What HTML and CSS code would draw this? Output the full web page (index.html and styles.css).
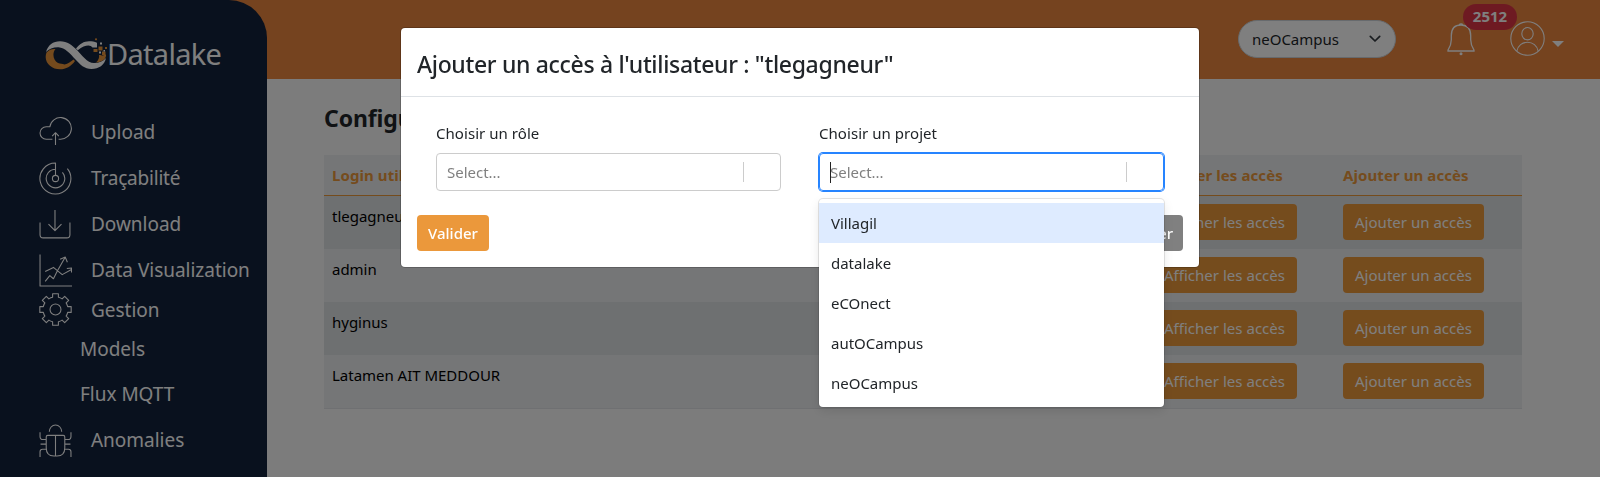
FILE: index.html
```html
<!DOCTYPE html>
<html lang="fr">
<head>
<meta charset="utf-8">
<title>Datalake</title>
<link rel="stylesheet" href="styles.css">
</head>
<body>
<div class="app">
  <header class="topbar">
    <div class="project-select"><span>neOCampus</span>
      <svg width="12" height="8" viewBox="0 0 12 8" fill="none" stroke="#343a40" stroke-width="1.7" stroke-linecap="round" stroke-linejoin="round"><path d="M1.3 1.3 6 6l4.700-4.700"/></svg>
    </div>
    <div class="bell">
      <svg width="28" height="33" viewBox="0 0 28 33" fill="none" stroke="#fff" stroke-width="1.3"><path d="M1 27.200c2.500-4 3.300-6 3.300-10.500v-4C4.300 5.500 8 2 14 2s9.700 3.500 9.700 10.700v4c0 4.500.8 6.500 3.300 10.500v.8H1zM12.500 1.700c0-1.100 3-1.100 3 0"/><circle cx="14" cy="30.700" r="1.500" fill="#fff" stroke="none"/></svg>
      <span class="badge">2512</span>
    </div>
    <div class="user">
      <svg width="35" height="35" viewBox="0 0 35 35" fill="none" stroke="#fff" stroke-width="1.100"><circle cx="17.500" cy="17.500" r="16.700"/><ellipse cx="17.500" cy="12.700" rx="5.700" ry="6.200"/><path d="M6.800 30.200c1-5.500 5.500-8.900 10.700-8.900s9.700 3.400 10.700 8.900"/></svg>
      <span class="caret"></span>
    </div>
  </header>
  <aside class="sidebar">
    <div class="brand">
      <svg width="64" height="34" viewBox="0 0 64 34">
        <path fill="#e8943a" d="M1.500 14.500C4 11.500 7 10.700 10.500 11 7 15 8 22 13 25c2.500 1.300 4.500.3 6.500 1.500C23 26 26 23.500 28.500 21.500l1.500 1.500C26 28.500 21 31.300 15 31.300 6 31.300-2 24 1.500 14.500z"/>
        <path fill="#fff" d="M1 14C3 7 8 3.200 15 3.200c7.500 0 12 4 16.500 8.300C37 17 42 25 49 25c5 0 9-1.500 12-5-1.500 7-7 11-14.500 11-7 0-11.500-4.500-16-9.500C25.500 16 20 9.500 13.500 9.200 8.500 9 4 11 1 14z"/>
        <path fill="#fff" d="M31 10.500C34.500 6 39 3.200 44 3.200c3 0 5.500.3 8 1.500v4.800h-4.500C45.500 6.500 40 6.500 32.800 12.200z"/>
        <path fill="#e8943a" d="M51 24.500c2.500-2.500 3.500-5 3-7.500 2 0 3 .7 4 .5 1-.5 2-1 3-1 .5 4-3 7.500-10 8z"/>
        <g fill="#e8943a"><circle cx="51" cy="1.300" r="1.100"/><rect x="48.500" y="11" width="4" height="3"/><rect x="53.500" y="8.500" width="4" height="4"/><rect x="60" y="9" width="2" height="2"/><rect x="57" y="13.500" width="3.500" height="3.500"/></g>
        <g fill="#fff"><rect x="55" y="4.500" width="2" height="2"/><rect x="54" y="13.500" width="2" height="2"/><rect x="58.500" y="12" width="1.500" height="1.500"/></g>
      </svg>
      <span>Datalake</span>
    </div>
    <nav class="nav">
      <a class="item"><svg class="ico" viewBox="0 0 32 32"><path d="M13 22.500H7A6 6 0 0 1 7 10.500H10.500A10.500 10.500 0 1 1 20.500 22.500h-1.500M16 28V16.500M12.800 19.500 16 16.200l3.200 3.300"/></svg><span>Upload</span></a>
      <a class="item"><svg class="ico" viewBox="0 0 32 32"><path d="M16 13V1a15 15 0 1 0 11.500 5.500M16 7a9 9 0 1 0 6.700 3"/><circle cx="16" cy="16" r="3"/></svg><span class="snug">Traçabilité</span></a>
      <a class="item"><svg class="ico" viewBox="0 0 32 32"><path d="M1 14v12q0 3 3 3h23q3 0 3-3V14M15.500 2v20M9.200 15.700l6.300 6.300 6.300-6.300"/></svg><span>Download</span></a>
      <a class="item"><svg class="ico" viewBox="0 0 32 32"><path d="M1 .5V31h31M6 26.500l4.500-5.500 3.500 3 3.500-7 8-14M6 17l8-4 8.500 7 9-5M20.500 5l5-2 2 5M27 14l4.500-.5V18"/></svg><span>Data Visualization</span></a>
      <a class="item short"><svg class="ico" viewBox="0 0 32 32"><path d="M13.200.800h5.600v3.400q2 .4 3.600 1.500L24.900 3.200l3.900 3.900-2.500 2.500q1.100 1.700 1.500 3.600h3.400v5.600h-3.400q-.4 2-1.500 3.600l2.500 2.500-3.900 3.900-2.500-2.500q-1.700 1.100-3.600 1.500v3.400h-5.600v-3.400q-2-.4-3.600-1.500l-2.500 2.500-3.900-3.900 2.500-2.500q-1.100-1.700-1.500-3.600H.8v-5.600h3.400q.4-2 1.500-3.600L3.200 7.100l3.900-3.900 2.500 2.500q1.700-1.100 3.600-1.500z"/><circle cx="16" cy="16" r="5.300"/></svg><span>Gestion</span></a>
      <a class="item sub"><span>Models</span></a>
      <a class="item sub"><span>Flux MQTT</span></a>
      <a class="item"><svg class="ico" viewBox="0 0 32 32"><path d="M7 12.500q0-1.500 1.500-1.500h15q1.500 0 1.500 1.500V23q0 8-7.500 8h-3Q7 31 7 23zM16 11v20M10 7.500a6 6.500 0 0 1 12 0M1 8v4q0 3 3 3h3M31 8v4q0 3-3 3h-3M1.500 19.500h5.500M25 19.500h5.500M1 32v-5q0-2.500 2.500-2.500H7M31 32v-5q0-2.500-2.500-2.500H25"/></svg><span>Anomalies</span></a>
    </nav>
  </aside>
  <main class="content">
    <h1>Configuration</h1>
    <div class="table">
      <div class="row head"><span>Login utilisateur</span><span>Afficher les accès</span><span>Ajouter un accès</span></div>
      <div class="row odd"><span>tlegagneur</span><span><button class="btn">Afficher les accès</button></span><span><button class="btn add">Ajouter un accès</button></span></div>
      <div class="row"><span>admin</span><span><button class="btn">Afficher les accès</button></span><span><button class="btn add">Ajouter un accès</button></span></div>
      <div class="row odd"><span>hyginus</span><span><button class="btn">Afficher les accès</button></span><span><button class="btn add">Ajouter un accès</button></span></div>
      <div class="row"><span>Latamen AIT MEDDOUR</span><span><button class="btn">Afficher les accès</button></span><span><button class="btn add">Ajouter un accès</button></span></div>
    </div>
  </main>
</div>
<div class="backdrop">
  <section class="modal">
    <h2><span>Ajouter un accès à l'utilisateur : "tlegagneur"</span></h2>
    <div class="fields">
      <div class="field"><label>Choisir un rôle</label><div class="select"><span>Select...</span><i></i></div></div>
      <div class="field"><label>Choisir un projet</label>
        <div class="select focus"><b class="cursor"></b><span>Select...</span><i></i></div>
        <ul class="menu"><li class="active">Villagil</li><li>datalake</li><li>eCOnect</li><li>autOCampus</li><li>neOCampus</li></ul>
      </div>
    </div>
    <div class="actions"><button class="btn ok">Valider</button><button class="btn close">Fermer</button></div>
  </section>
</div>
</body>
</html>
```
FILE: styles.css
```css
* { box-sizing: border-box; }
body { margin: 0; height: 477px; overflow: hidden; font-family: "Noto Sans", "Open Sans", sans-serif; font-size: 15px; letter-spacing: -0.02px; color: #212529; }
.app { display: grid; grid-template: 79px 398px / 267px 1fr; background: #f9f9f9; }
.topbar { grid-area: 1 / 1 / 2 / 3; background: #ea863e; display: flex; align-items: flex-start; padding: 20px 36px 0 1238px; }
.sidebar { grid-area: 1 / 1 / 3 / 2; background: #12223c; border-top-right-radius: 38px; color: #fff; z-index: 1; }
.brand { display: flex; align-items: center; height: 109px; padding-left: 45px; font-size: 29px; letter-spacing: -0.700px; }
.brand svg { flex: none; margin-right: -2px; }
.brand span { margin-top: -2px; }
.nav { display: flex; flex-direction: column; }
.item { display: flex; align-items: center; height: 46px; padding-left: 39px; font-size: 19px; white-space: nowrap; }
.item.short { height: 33px; }
.item.sub { height: 45.500px; padding-left: 80px; }
.item .snug { letter-spacing: -0.200px; }
.ico { width: 33px; height: 33px; margin-right: 19px; flex: none; fill: none; stroke: #fff; stroke-width: 1.050; stroke-linejoin: round; }
.project-select { width: 158px; height: 38px; border: 1px solid #ced4da; border-radius: 19px; background: #fff; display: flex; align-items: center; justify-content: space-between; padding: 0 14px 0 13px; flex: none; }
.bell { position: relative; margin: 3px 0 0 51px; flex: none; height: 33px; }
.badge { position: absolute; left: 16px; top: -19px; width: 54px; height: 26px; border-radius: 13px; background: #dc3545; color: #fff; font-weight: 700; font-size: 15px; line-height: 25px; text-align: center; letter-spacing: 0; }
.user { display: flex; align-items: center; margin: 1px 0 0 35px; gap: 7px; }
.caret { border: 6px solid transparent; border-top-color: #fff; border-bottom: 0; margin-top: 11px; }
.content { padding: 22px 78px 0 57px; }
h1 { margin: 0; font-size: 23px; line-height: 34px; height: 54px; font-weight: 700; letter-spacing: -0.100px; }
.table { border-bottom: 1px solid #dfe1e4; color: #000; }
.row { display: grid; grid-template-columns: 820px 191px 1fr; height: 53px; background: #eaecef; padding: 8px 0 0 8px; line-height: 24px; }
.row.odd { background: #dde0e3; }
.row.head { height: 41px; border-bottom: 1px solid #eb983b; color: #eb983b; font-weight: 700; letter-spacing: 0.080px; }
.btn { display: block; height: 36px; width: 145px; padding: 0; border: 0; border-radius: 4px; background: #eb983b; color: #fff; font: inherit; letter-spacing: 0.020px; }
.btn.add { width: 141px; }
.backdrop { position: fixed; inset: 0; background: rgba(0,0,0,.5); z-index: 5; padding: 28px 401px 0; }
.modal { height: 239px; background: #fff; border-radius: 4px; box-shadow: 0 0 0 1px rgba(0,0,0,.2); }
h2 { margin: 0; height: 69px; border-bottom: 1px solid #dee2e6; padding: 17px 16px 0; font-size: 23px; letter-spacing: -0.320px; line-height: 38px; font-weight: 500; white-space: nowrap; }
.fields { display: flex; gap: 38px; padding: 24px 35px 0; }
.field { width: 345px; position: relative; }
label { display: block; height: 32px; line-height: 24px; letter-spacing: 0.050px; }
.select { height: 38px; border: 1px solid #ccc; border-radius: 4px; display: flex; align-items: center; justify-content: space-between; padding: 0 36px 0 10px; color: #808080; position: relative; }
.select i { width: 1px; height: 20px; background: #ccc; }
.select.focus { border-color: #2684ff; box-shadow: 0 0 0 1px #2684ff; }
.cursor { position: absolute; left: 10px; top: 8px; width: 1px; height: 21px; background: #222; }
.menu { position: absolute; left: 0; top: 78px; width: 345px; height: 208px; margin: 0; padding: 4px 0; list-style: none; background: #fff; border-radius: 4px; box-shadow: 0 0 0 1px rgba(0,0,0,.1), 0 4px 11px rgba(0,0,0,.1); z-index: 2; }
.menu li { height: 40px; line-height: 40px; padding-left: 12px; }
.menu .active { background: #deebff; }
.actions { display: flex; justify-content: space-between; padding: 24px 16px 0; }
.btn.ok { width: 72px; font-weight: 500; }
.btn.close { width: 76px; padding-left: 4px; background: #808080; font-weight: 500; }
```
